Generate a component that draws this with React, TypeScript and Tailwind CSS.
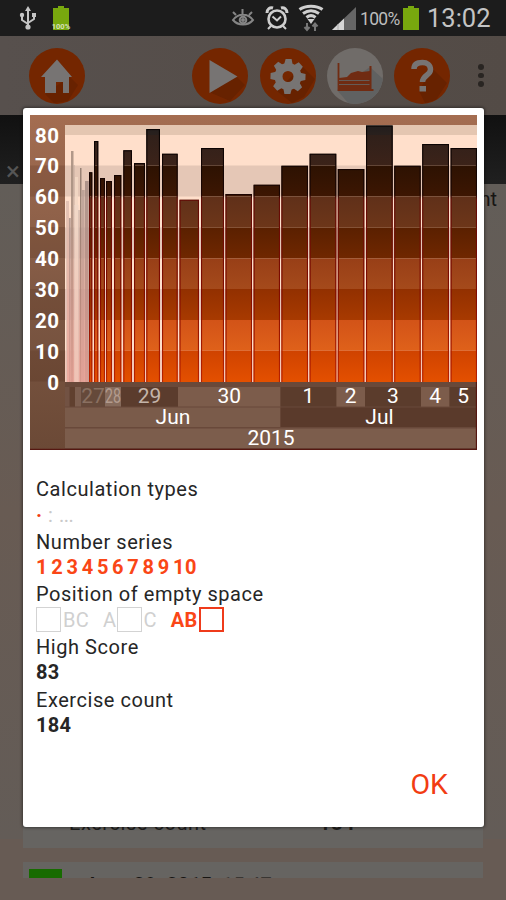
import type { ReactNode } from "react";

const BASE = 267;

// x, width, top of every bar, in chart pixels
const bars = [
  [59, 3.3, 57.3],
  [64, 4.3, 26],
  [70, 5, 63],
  [76, 6, 66],
  [84, 7.3, 60],
  [93.3, 8.7, 35.3],
  [104, 11, 48],
  [116.3, 13.7, 14],
  [132, 15.7, 38.7],
  [149.5, 19.5, 84.7],
  [171, 23, 33],
  [195.5, 26.5, 79],
  [223.6, 26.4, 69.7],
  [251.4, 26.6, 50.7],
  [279.6, 26.7, 38.7],
  [307.8, 26.5, 54],
  [336, 26.7, 10.5],
  [364.2, 26.5, 50.7],
  [392.2, 26.8, 29],
  [420.6, 26.4, 33],
];

const fadedBars = [
  [36, 3, 86, "#e0c0b2"],
  [39, 1.7, 103, "#a59189"],
  [41, 2.5, 36, "#a58c7e"],
  [43.5, 1.2, 50, "#c9b0a2"],
  [45, 3, 62, "#f3d8c6"],
  [48, 1.7, 95, "#c5afa3"],
  [50, 1.5, 53, "#8b756a"],
  [51.5, 3.2, 75, "#b79d94"],
  [55, 3.7, 66, "#a48b82"],
] as const;

const bands = [
  [10, 10, "#211d1d", "#29201d"],
  [20, 30.5, "#30201a", "#3c2319"],
  [50.5, 31, "#2d1202", "#3d1602"],
  [81.5, 31, "#603019", "#6d3619"],
  [112.5, 31, "#5a2000", "#702700"],
  [143.5, 30.5, "#983f17", "#a54a1b"],
  [174, 31, "#923000", "#a83a00"],
  [205, 30.5, "#d25318", "#df611a"],
  [235.5, 31.5, "#cf4300", "#e45000"],
] as const;

const days = [
  { x: 35, w: 4, label: "", fill: "#725243" },
  { x: 40, w: 5, label: "", fill: "#60402f" },
  { x: 45, w: 6, label: "", fill: "#7c5e4f" },
  { x: 51, w: 24, label: "27", fill: "#65493a", color: "#8a7061" },
  { x: 75, w: 16, label: "28", fill: "#866b5c", color: "#b39b8e" },
  { x: 91, w: 57, label: "29", fill: "#5b3c2d", color: "#c4b4a9" },
  { x: 148, w: 102.5, label: "30", fill: "#7c5c4b", color: "#ffffff" },
  { x: 250.5, w: 56, label: "1", fill: "#5b3c2c", color: "#ffffff" },
  { x: 306.5, w: 28.5, label: "2", fill: "#7c5c4b", color: "#ffffff" },
  { x: 335, w: 56, label: "3", fill: "#5b3c2c", color: "#ffffff" },
  { x: 391, w: 28.5, label: "4", fill: "#7c5c4b", color: "#ffffff" },
  { x: 419.5, w: 27.5, label: "5", fill: "#5b3c2c", color: "#ffffff" },
];

function ScoreChart() {
  return (
    <svg width="447" height="335" viewBox="0 0 447 335" className="block" fontFamily="Roboto, sans-serif">
      <defs>
        <linearGradient id="frame" x1="0" y1="0" x2="0" y2="1">
          <stop offset="0" stopColor="#a46d51" />
          <stop offset="0.6" stopColor="#7b5642" />
          <stop offset="1" stopColor="#6b4936" />
        </linearGradient>
        <linearGradient id="edge" gradientUnits="userSpaceOnUse" x1="0" y1="10" x2="0" y2={BASE}>
          <stop offset="0" stopColor="#050303" />
          <stop offset="0.27" stopColor="#1b0502" />
          <stop offset="0.29" stopColor="#620b06" />
          <stop offset="0.65" stopColor="#810b00" />
          <stop offset="1" stopColor="#b92100" />
        </linearGradient>
        <linearGradient id="haze" x1="0" y1="0" x2="0" y2="1">
          <stop offset="0" stopColor="#e58e80" stopOpacity="0" />
          <stop offset="1" stopColor="#f0a095" stopOpacity="0.7" />
        </linearGradient>
        {bands.map(([y, , from, to]) => (
          <linearGradient key={y} id={`band${y}`} x1="0" y1="0" x2="0" y2="1">
            <stop offset="0" stopColor={from} />
            <stop offset="1" stopColor={to} />
          </linearGradient>
        ))}
        <clipPath id="bars">
          {bars.map(([x, w, y]) => (
            <rect key={x} x={x} y={y} width={w} height={BASE - y} />
          ))}
        </clipPath>
      </defs>

      <rect width="447" height="335" fill="url(#frame)" />
      {[20, 81.5, 143.5, 205].map((y) => (
        <rect key={y} y={y + 30.5} width="35" height="31" fill="#40200e" opacity="0.17" />
      ))}

      <rect x="35" y="10" width="412" height="257" fill="#ffdfcb" />
      <rect x="35" y="10" width="412" height="10" fill="#e4c6b1" />
      <rect x="35" y="50.5" width="412" height="31" fill="#e5c7b6" />
      <rect x="35" y="112.5" width="412" height="31" fill="#e4c7b8" />
      <rect x="35" y="174" width="412" height="31" fill="#e6c4b8" />
      <rect x="35" y="235.5" width="412" height="31.5" fill="#f4c8b8" />

      {fadedBars.map(([x, w, y, fill]) => (
        <rect key={x} x={x} y={y} width={w} height={BASE - y} fill={fill} opacity="0.85" />
      ))}
      <rect x="37" y="90" width="21" height="177" fill="url(#haze)" />
      <rect x="44" y="90" width="5" height="177" fill="#f0d9cb" opacity="0.45" />

      <g clipPath="url(#bars)">
        {bands.map(([y, h]) => (
          <rect key={y} x="35" y={y} width="412" height={h} fill={`url(#band${y})`} />
        ))}
        {bars.map(([x, w, y]) => (
          <rect key={x} x={x} y={y} width={w} height={BASE - y + 4} fill="none" stroke="url(#edge)" strokeWidth="2.2" />
        ))}
      </g>

      {["80", "70", "60", "50", "40", "30", "20", "10", "0"].map((label, i) => (
        <text key={label} x="29.5" y={27.5 + i * 30.9} textAnchor="end" fill="#fff" fontSize="20.5" fontWeight="700" letterSpacing="0.5">
          {label}
        </text>
      ))}

      {/* Time axis: days, months, year */}
      <rect x="35" y="267" width="412" height="68" fill="#69493a" />
      {days.map((d) => (
        <g key={d.x}>
          <rect x={d.x} y="272" width={d.w} height="19.5" fill={d.fill} />
          {d.label === "28" ? (
            <text x={d.x} y="288" fill={d.color} fontSize="20" textLength="16" lengthAdjust="spacingAndGlyphs">
              28
            </text>
          ) : (
            <text x={d.x + d.w / 2} y="288.3" textAnchor="middle" fill={d.color} fontSize="21">
              {d.label}
            </text>
          )}
        </g>
      ))}
      <rect x="35" y="292.5" width="215.5" height="19.5" fill="#7a5b4a" />
      <rect x="250.5" y="292.5" width="196.5" height="19.5" fill="#5a3a2b" />
      <rect x="35" y="313.5" width="412" height="19.5" fill="#7c5d4c" />
      <text x="143" y="309.3" textAnchor="middle" fill="#fff" fontSize="21">Jun</text>
      <text x="349.5" y="309.3" textAnchor="middle" fill="#fff" fontSize="21">Jul</text>
      <text x="241" y="330.3" textAnchor="middle" fill="#fff" fontSize="21">2015</text>
      <path d="M0 334.3H446.5V267" fill="none" stroke="#551711" strokeWidth="1.3" />
    </svg>
  );
}

function Battery({ level }: { level?: string }) {
  return (
    <svg width="20" height="26" viewBox="0 0 20 26" className="flex-none overflow-visible">
      <path d="M6 1h6v2h5v22H1V3h5z" fill="#78a80e" />
      {level && (
        <text x="9" y="23.5" textAnchor="middle" fill="#d6e0bb" fontSize="7.5" fontWeight="700" fontFamily="Roboto, sans-serif">
          {level}
        </text>
      )}
    </svg>
  );
}

function StatusBar() {
  return (
    <div className="flex h-9 items-center bg-[#1c1c1c] text-[#bdbdbd]">
      <svg width="20" height="26" viewBox="0 0 20 26" className="ml-[18px]" fill="none" stroke="#c4c4c4" strokeWidth="2">
        <path d="M10 4v18M4 11v4l6 4M16 10v4l-6 4" />
        <path d="M7 6l3-5 3 5zM14 8h4v4h-4z" fill="#c4c4c4" stroke="none" />
        <circle cx="4" cy="10" r="2.2" fill="#c4c4c4" stroke="none" />
        <circle cx="10" cy="22" r="2.6" fill="#c4c4c4" stroke="none" />
      </svg>
      <div className="ml-[14px]">
        <Battery level="100%" />
      </div>
      <svg width="24" height="20" viewBox="0 0 24 20" className="ml-[159px]" fill="none" stroke="#858585" strokeWidth="2">
        <path d="M2 12c5-7 15-7 20 0c-5 6-15 6-20 0zM11.5 6V1M5 7L2 4M18 7l3-3" />
        <circle cx="12" cy="12" r="3.3" />
        <circle cx="12" cy="12" r="1" fill="#858585" />
      </svg>
      <svg width="24" height="26" viewBox="0 0 24 26" className="ml-[10px]" fill="none" stroke="#cecece" strokeWidth="2.6">
        <circle cx="12" cy="14" r="8.5" />
        <path d="M7.5 11.5l4.5 4 4-4M6 21l-3 3M18 21l3 3" strokeWidth="2" />
        <path d="M2 8c0-4 3-6 6-5M22 8c0-4-3-6-6-5" strokeWidth="3" />
      </svg>
      <svg width="26" height="28" viewBox="0 0 26 28" className="ml-[9px]" fill="none" stroke="#cfcfcf">
        <path d="M1.5 5.5c6-4.500 17-4.500 23 0M5 9.500c5-3.500 11-3.500 16 0M8.500 13.500c3-2.500 6-2.500 9 0" strokeWidth="3" />
        <path d="M9.500 15h7l-3.500 5z" fill="#cfcfcf" stroke="none" />
        <path d="M9 19v6M6.500 23l2.500 3 2.500-3M17 27v-7M14.500 22.500l2.500-3 2.500 3" stroke="#777" strokeWidth="2" />
      </svg>
      <svg width="25" height="25" viewBox="0 0 25 25" className="ml-[8px] mt-[1px]">
        <path d="M0 24L24 1v23z" fill="#666" />
        <path d="M0 24L12 12.5V24z" fill="#d5d5d5" />
        <path d="M6 18v6" stroke="#aaa" />
      </svg>
      <span className="ml-[3px] mt-[2px] w-[42px] whitespace-nowrap text-[17.5px] tracking-[-0.7px]">100%</span>
      <Battery />
      <span className="ml-[5px] whitespace-nowrap text-[25.5px] leading-9 text-[#c4c4c4]">13:02</span>
    </div>
  );
}

function RoundButton({ className, children }: { className: string; children: ReactNode }) {
  return (
    <div className={`flex h-14 w-14 flex-none items-center justify-center overflow-hidden rounded-full ${className}`}>
      <svg width="56" height="56" viewBox="0 0 56 56">{children}</svg>
    </div>
  );
}

function ActionBar() {
  return (
    <div className="flex h-[79px] items-center bg-linear-to-r from-[#57504d] to-[#534b46] pl-[29px]">
      <RoundButton className="bg-[#742600]">
        <path d="M40 29l-5-6 14 14-10 16-14 2-9-9z" fill="#682200" />
        <path d="M28 11.5L43 29h-3v16h-6V34h-7v11H16V29h-4z" fill="#777473" />
      </RoundButton>
      <RoundButton className="ml-[107px] bg-[#742600]">
        <path d="M45 29l8 8-15 16-21-9z" fill="#672200" />
        <path d="M17.5 12L45.5 28.500l-28 16.500z" fill="#777473" />
      </RoundButton>
      <RoundButton className="ml-3 bg-[#742600]">
        <path d="M42 18l13 13-11 18-12 6-15-12z" fill="#672200" />
        <circle cx="28" cy="28.5" r="9.5" fill="none" stroke="#777473" strokeWidth="8" />
        {[0, 45, 90, 135].map((a) => (
          <path key={a} d="M25 11h6l1.500 6.500h-9zM25 46h6l1.500-6.500h-9z" fill="#777473" transform={`rotate(${a + 2} 28 28.5)`} />
        ))}
      </RoundButton>
      <RoundButton className="ml-[11px] bg-[#706c69]">
        <path d="M43 19l14 13v24H22L10 42z" fill="#606161" />
        <path d="M11.5 15v27h35" fill="none" stroke="#702c12" strokeWidth="1.8" />
        <path d="M12 30l8-1 4-4 7-2 4 1 8-1v20H12z" fill="#702b12" />
        <path d="M12 32.5h31M12 36.5h31" stroke="#655b57" />
        <path d="M43.5 18v25" stroke="#702b12" strokeWidth="2" />
      </RoundButton>
      <RoundButton className="ml-[11px] bg-[#742600]">
        <path d="M38 20l15 15-11 17-11 3-6-12z" fill="#672200" />
        <path d="M20 21c0-5 4-6.500 8.500-6.500s8 2.500 8 7c0 6-8 5.500-8 12.500" fill="none" stroke="#777473" strokeWidth="5.500" />
        <rect x="25.5" y="38" width="6.5" height="5.5" fill="#777473" />
      </RoundButton>
      <div className="ml-[28px] flex flex-col gap-[3px]">
        <i className="h-[5.5px] w-[5.5px] rounded-full bg-[#292522]" />
        <i className="h-[5.5px] w-[5.5px] rounded-full bg-[#292522]" />
        <i className="h-[5.5px] w-[5.5px] rounded-full bg-[#292522]" />
      </div>
    </div>
  );
}

function StatsDialog() {
  return (
    <div className="absolute left-[23px] top-[108px] h-[719px] w-[461px] rounded-[3px] bg-white pl-[7px] pt-[7px] shadow-[0_0_3px_1px_rgba(0,0,0,0.4)]">
      <ScoreChart />
      <div className="flex flex-col pl-[6px] pt-[26px] text-[20px] leading-[26.35px] tracking-[0.55px] text-[#262626]">
        <div>Calculation types</div>
        <div className="flex h-[26.35px] whitespace-pre text-[#c9c9c9]">
          <span className="w-[12px] font-bold text-[#f23b12]">·</span>
          <span className="w-[11px]">:</span>
          <span className="tracking-[-0.5px]">...</span>
        </div>
        <div>Number series</div>
        <div className="-mt-px mb-px flex gap-[3.2px] font-bold text-[#fa4616]">
          {[1, 2, 3, 4, 5, 6, 7, 8, 9, 10].map((n) => (
            <span key={n}>{n}</span>
          ))}
        </div>
        <div>Position of empty space</div>
        <div className="-mt-px mb-px flex h-[26.35px] items-center tracking-[0.3px] text-[#d0d0d0]">
          <i className="mr-[2px] h-[25px] w-[25px] border-[1.5px] border-[#d3d3d3]" />
          BC
          <span className="ml-[14px]">A</span>
          <i className="mx-[1px] h-[25px] w-[25px] border-[1.5px] border-[#d3d3d3]" />
          C
          <span className="ml-[14px] font-bold text-[#fa4616]">AB</span>
          <i className="ml-[1px] h-[25px] w-[25px] border-2 border-[#ef3b1b]" />
        </div>
        <div>High Score</div>
        <div className="-mt-px mb-px font-bold tracking-[0.3px]">83</div>
        <div>Exercise count</div>
        <div className="-mt-px mb-px font-bold tracking-[0.3px]">184</div>
      </div>
      <div className="mt-[27px] pr-[36px] text-right text-[28.5px] leading-[38px] text-[#f23c12]">OK</div>
    </div>
  );
}

export default function App() {
  return (
    <div className="relative h-[900px] w-[506px] overflow-hidden bg-[#675b54] font-[Roboto,sans-serif]">
      <StatusBar />
      <ActionBar />
      <div className="flex h-[69px] items-end bg-linear-to-b from-[#111] to-[#202020] pb-[4px] pl-[6px]">
        <span className="text-[26px] leading-[18px] text-[#555]">×</span>
      </div>
      <div className="flex h-[655px] flex-col bg-linear-to-b from-[#625d58] via-[#685b53] to-[#635c57]">
        <div className="pr-[9px] pt-[3px] text-right text-[20px] leading-[24px] text-[#171513]">Count</div>
      </div>
      <div className="mx-[23px] -mt-[20px] flex h-[29px] items-start bg-[#666461] pl-[46px] text-[20px] leading-[8px] tracking-[0.55px] text-[#211f1e]">
        <span className="w-[250px]">Exercise count</span>
        <span className="font-bold">184</span>
      </div>
      <div className="mx-[23px] mt-[14px] flex h-[16px] items-start overflow-hidden bg-[#666461] pl-[6px] pt-[7px]">
        <div className="h-[9px] w-[33px] bg-[#176b00]" />
        <div className="ml-[22px] mt-[4px] whitespace-pre text-[20px] leading-[24px] text-[#171513]">
          <b>June 29, 2015</b>  <span className="text-[#393633]">15:47</span>
        </div>
      </div>
      <StatsDialog />
    </div>
  );
}
